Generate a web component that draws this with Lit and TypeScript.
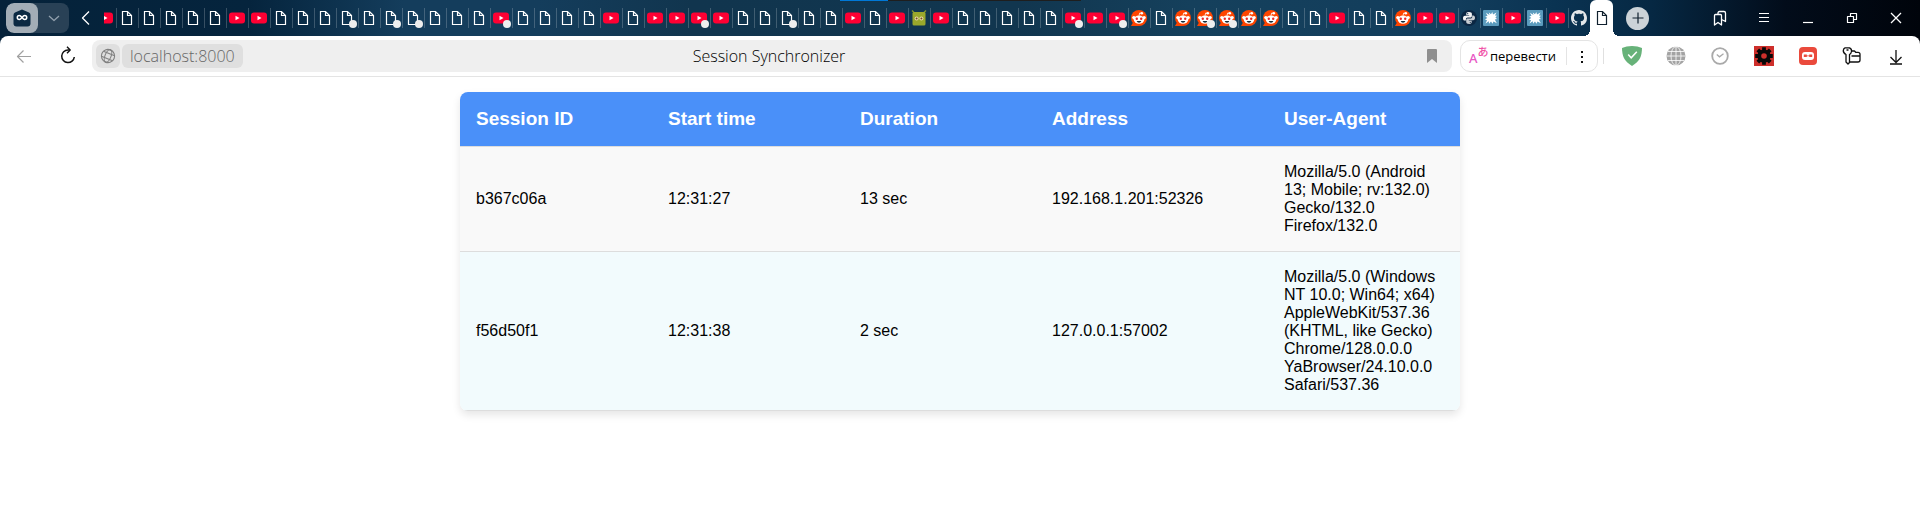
import { LitElement, html, css, svg } from "lit";
import { customElement, property } from "lit/decorators.js";

type TabKind = "doc" | "yt" | "reddit" | "bot" | "py" | "splat" | "gh";
interface Tab { kind: TabKind; dot: boolean; title: string; }
interface Session { id: string; start: string; duration: string; address: string; agent: string; }

const KINDS: Record<string, [TabKind, string]> = {
  d: ["doc", "Page"],
  y: ["yt", "YouTube"],
  r: ["reddit", "Reddit"],
  b: ["bot", "Bot"],
  p: ["py", "Python"],
  s: ["splat", "Forum"],
  g: ["gh", "GitHub"],
};

// One letter per tab; an upper-case letter carries a notification dot.
const STRIP = "ydddddyydddDdDDdddYddddydyyYyddDddydybydddddYyYrdrRRrrddyddryypsysyg";

const TABS: Tab[] = [...STRIP].map((c) => {
  const [kind, title] = KINDS[c.toLowerCase()];
  return { kind, title, dot: c !== c.toLowerCase() };
});

const SESSIONS: Session[] = [
  { id: "b367c06a", start: "12:31:27", duration: "13 sec", address: "192.168.1.201:52326",
    agent: "Mozilla/5.0 (Android 13; Mobile; rv:132.0) Gecko/132.0 Firefox/132.0" },
  { id: "f56d50f1", start: "12:31:38", duration: "2 sec", address: "127.0.0.1:57002",
    agent: "Mozilla/5.0 (Windows NT 10.0; Win64; x64) AppleWebKit/537.36 (KHTML, like Gecko) Chrome/128.0.0.0 YaBrowser/24.10.0.0 Safari/537.36" },
];

const doc = svg`<path d="M3.500 1.500h5l4 4v9h-9z M8.500 1.500v4h4" fill="none" stroke="currentColor" stroke-width="1.200"/>`;

const FAVICONS = {
  doc,
  yt: svg`<rect x="0" y="2.500" width="16" height="11" rx="3" fill="#ff0033"/><path d="M6.500 5.800v4.400l4-2.200z" fill="#fff"/>`,
  reddit: svg`<circle cx="8" cy="8" r="8" fill="#ff4500"/><path d="M0 16l2.600-4.500L8 16z" fill="#ff4500"/>
    <circle cx="2.900" cy="7.600" r="1.700" fill="#fff"/><circle cx="13.100" cy="7.600" r="1.700" fill="#fff"/>
    <ellipse cx="8" cy="9.600" rx="5.300" ry="4.100" fill="#fff"/><circle cx="10.800" cy="3.300" r="1.300" fill="#fff"/>
    <path d="M8 5.600l.7-2.600 2 .4" fill="none" stroke="#fff" stroke-width=".8"/>
    <circle cx="5.800" cy="8.800" r="1.200" fill="#e8262a"/><circle cx="10.200" cy="8.800" r="1.200" fill="#e8262a"/>
    <path d="M5.600 11h4.800Q9.800 12.800 8 12.800T5.600 11z" fill="#162b36"/>`,
  bot: svg`<path d="M1 .6l2.500 2.400M15 .6l-2.500 2.400" stroke="#7f9330" stroke-width="1.400"/>
    <rect x="1.500" y="2" width="13" height="13.500" rx="1.500" fill="#9aa82b"/>
    <circle cx="5.600" cy="8.500" r="2" fill="#e9dcae"/><circle cx="10.400" cy="8.500" r="2" fill="#e9dcae"/>
    <circle cx="5.600" cy="8.500" r="1" fill="#704b1d"/><circle cx="10.400" cy="8.500" r="1" fill="#704b1d"/>`,
  py: svg`<circle cx="8" cy="8" r="8" fill="#0b2743"/>
    <path d="M7.800 2C5.600 2 5.300 3 5.300 3.900v1.300h2.900v.6H4C2.600 5.800 2 7 2 8.200s.6 2.400 1.800 2.400h1.100V9.200c0-1 .8-1.800 1.800-1.800h2.700c.9 0 1.500-.7 1.500-1.500v-2C10.900 2.700 9.800 2 7.800 2z" fill="#f4f5f6"/>
    <path d="M8.200 14c2.200 0 2.500-1 2.500-1.900v-1.300H7.800v-.6H12c1.400 0 2-1.200 2-2.400s-.6-2.400-1.800-2.400h-1v1.400c0 1-.8 1.800-1.800 1.800H6.700c-.9 0-1.500.7-1.500 1.500v2C5.200 13.300 6.200 14 8.200 14z" fill="#c9ced3"/>
    <circle cx="6.700" cy="3.700" r=".6" fill="#0b2743"/><circle cx="9.300" cy="12.300" r=".6" fill="#0b2743"/>`,
  splat: svg`<rect width="16" height="16" rx="1" fill="#5b9bbd"/>
    <path d="M6.500 5L5.800 2.500 8 4.300 9.300 2l.7 2.600L13.500 2.500 12 5.500l2 .3-1.600 1.700L14 9l-2.200.6 2 3.600-3.300-1.700-1 2.300L8 11.600l-2 2.200-.2-2.500L2.500 13.500 4 10.300 2 9.500 4.200 8 2.200 6.200l2.300-.1L3 2.800z" fill="#fff"/>`,
  gh: svg`<path fill="#e3e7ea" fill-rule="evenodd" d="M8 0C3.580 0 0 3.580 0 8c0 3.540 2.290 6.530 5.470 7.590.4.070.55-.17.55-.38 0-.19-.01-.82-.01-1.490-2.010.37-2.530-.49-2.690-.94-.09-.23-.48-.94-.82-1.130-.28-.15-.68-.52-.01-.53.63-.01 1.080.58 1.230.82.72 1.210 1.870.87 2.330.66.07-.52.28-.87.51-1.070-1.780-.2-3.640-.89-3.640-3.950 0-.87.31-1.590.82-2.150-.08-.2-.36-1.020.08-2.120 0 0 .67-.21 2.200.82.64-.18 1.320-.27 2-.27s1.360.09 2 .27c1.530-1.040 2.200-.82 2.200-.82.44 1.100.16 1.920.08 2.120.51.56.82 1.270.82 2.150 0 3.070-1.870 3.750-3.650 3.950.29.25.54.73.54 1.480 0 1.070-.01 1.930-.01 2.200 0 .21.15.46.55.38A8.010 8.010 0 0 0 16 8c0-4.420-3.580-8-8-8z"/>`,
};

const line = (d: string, w = 1.2) =>
  svg`<path d=${d} fill="none" stroke="currentColor" stroke-width=${w} stroke-linejoin="round"/>`;

const ICONS: Record<string, unknown> = {
  profile: svg`<path d="M10 1.500L17 4.600Q18.500 5.400 18.500 7v8.500q0 3-3 3h-11q-3 0-3-3V7q0-1.600 1.500-2.400z" fill="#0b2942"/>
    <path d="M10 9.500c-1-1.300-1.700-2-2.700-2a2 2 0 0 0 0 4c1 0 1.700-.7 2.700-2s1.700-2 2.700-2a2 2 0 0 1 0 4c-1 0-1.700-.7-2.700-2z" fill="none" stroke="#fff" stroke-width="1.500"/>`,
  chevron: line("M5 8l5 4.500L15 8", 1.3),
  scroll: line("M12 3.500L5.500 10l6.500 6.500", 1.3),
  plus: line("M10 4.500v11M4.500 10h11", 1.2),
  collections: svg`${line("M4.500 7.500q0-1 1-1h5q1 0 1 1v9.500L8 14.500 4.500 17z", 1.3)}${line("M8 6.500V5q0-1.500 1.500-1.500h4.500q1.500 0 1.500 1.500v8.500l-4-2", 1.3)}`,
  menu: line("M5 5.500h10M5 9.500h10M5 13.500h10"),
  minimize: line("M5 14.500h10"),
  restore: line("M5.500 8.500h6v6h-6zM8.500 8.500v-3h6v6h-3"),
  close: line("M5 5l10 10M15 5L5 15", 1.3),
  back: line("M17 10.500H3.500M9.500 4.500l-6 6 6 6"),
  reload: svg`${line("M12 4H10A6.300 6.300 0 1 0 16.300 11", 1.5)}${line("M9 .8l3.200 3.200L9 7.200", 1.4)}`,
  globe: svg`<g transform="rotate(22 10 10)" fill="none" stroke="currentColor" stroke-width="1.100"><circle cx="10" cy="10" r="6.600"/><ellipse cx="10" cy="10" rx="3" ry="6.600"/><path d="M4 7.300h12M4 12.700h12"/></g>`,
  bookmark: svg`<path d="M5 4q0-1 1-1h8q1 0 1 1v13l-5-4-5 4z" fill="#8f8f8f"/>`,
  dots: svg`<path d="M9 4h2v2H9zM9 9h2v2H9zM9 14h2v2H9z" fill="#111"/>`,
  shield: svg`<path d="M10 0c4 0 7 .7 10 2-.1 8-2 13-10 18C2 15 .1 10 0 2 3 .7 6 0 10 0z" fill="#67b279"/><path d="M6.200 8.500l3 3.300 5.600-6" fill="none" stroke="#fff" stroke-width="1.500"/>`,
  world: svg`<circle cx="10" cy="10" r="9.500" fill="#a3a3a3"/><path d="M10 .5v19M.5 10h19M2 5.500h16M2 14.500h16" stroke="#fff" stroke-width=".8"/><ellipse cx="10" cy="10" rx="5" ry="9.500" fill="none" stroke="#fff" stroke-width=".8"/>`,
  clock: svg`<circle cx="10" cy="10" r="7.800" fill="none" stroke="#a9a9a9" stroke-width="1.800"/><path d="M6.800 8.500l2.700 2.300 4-3" fill="none" stroke="#a9a9a9" stroke-width="1.300"/>`,
  gear: svg`<path d="M0 0h20v20H0z" fill="#ce2f2b"/>
    <g stroke="#080808" stroke-width="3.800" stroke-linejoin="round"><path d="M10 1.200v17.600M1.200 10h17.600M3.800 3.800l12.400 12.400M16.200 3.800L3.800 16.200"/></g>
    <circle cx="10" cy="10" r="6.600" fill="#080808"/><circle cx="10" cy="10" r="2.800" fill="#ce2f2b"/>`,
  mask: svg`<rect x="1" y="1" width="18" height="18" rx="4" fill="#ea4a3c"/><rect x="4" y="6" width="12" height="8" rx="3" fill="#fff"/>
    <path d="M5.800 8.500h3v2.500h-3zM11.200 8.500h3v2.500h-3zM8.800 9.400h2.400v.8H8.800z" fill="#ea4a3c"/>`,
  keys: svg`${line("M3 1.800h4.500Q10 3 9.500 5.500 9.200 7.500 7.500 8.500v8L6 18l-2-2V8.500Q1 7 1.300 4.300 1.600 2.300 3 1.800z", 1.3)}${line("M9.700 5h2.800l1.200 1.300H16q2 0 2 2V14q0 2-2 2H7.500M9.500 10H18M4.500 4h2", 1.3)}`,
  download: line("M10 4v12M4.500 11l5.500 5.500 5.500-5.500M4 18h12", 1.3),
};

@customElement("ui-icon")
export class UiIcon extends LitElement {
  @property() name = "";
  static styles = css`
    :host { display: block; width: 20px; height: 20px; }
    svg { display: block; width: 100%; height: 100%; overflow: visible; }
  `;
  render() {
    return html`<svg viewBox="0 0 20 20" aria-hidden="true">${ICONS[this.name]}</svg>`;
  }
}

@customElement("tab-strip")
export class TabStrip extends LitElement {
  static styles = css`
    :host { display: flex; min-width: 0; height: 36px; overflow: hidden; }
    .strip { display: flex; min-width: 0; overflow: hidden; }
    .tab {
      position: relative; flex: none; width: 22px; height: 36px; padding: 0 3px;
      border: 0; background: none; color: #fff;
      display: flex; align-items: center; justify-content: center;
    }
    .tab:first-child { margin-left: -10px; }
    .tab::after {
      content: ""; position: absolute; right: -1px; top: 8px; width: 1px; height: 20px;
      background: rgba(255, 255, 255, 0.2);
    }
    .tab:last-child::after { display: none; }
    svg { display: block; width: 16px; height: 16px; flex: none; }
    .dot {
      position: absolute; right: 1px; bottom: 8px; width: 8px; height: 8px;
      border-radius: 50%; background: #eee;
    }
    .active {
      position: relative; flex: none; width: 23px; height: 36px; margin: 0 6px 0 0; padding: 0;
      border: 0; border-radius: 6px 6px 0 0; background: #fff; color: #10202e;
      display: flex; align-items: center; justify-content: center;
    }
    .active::before, .active::after {
      content: ""; position: absolute; bottom: 0; width: 6px; height: 6px;
    }
    .active::before { right: 100%; background: radial-gradient(circle at 0 0, transparent 6px, #fff 6px); }
    .active::after { left: 100%; background: radial-gradient(circle at 100% 0, transparent 6px, #fff 6px); }
  `;
  render() {
    return html`
      <div class="strip" role="tablist">
        ${TABS.map((t) => html`
          <button class="tab" role="tab" aria-label=${t.title}>
            <svg viewBox="0 0 16 16" aria-hidden="true">${FAVICONS[t.kind]}</svg>
            ${t.dot ? html`<span class="dot"></span>` : null}
          </button>`)}
      </div>
      <button class="active" role="tab" aria-selected="true" aria-label="Session Synchronizer">
        <svg viewBox="0 0 16 16" aria-hidden="true">${doc}</svg>
      </button>`;
  }
}

@customElement("session-table")
export class SessionTable extends LitElement {
  static styles = css`
    :host { display: block; max-width: 1000px; margin: 15px auto 0; }
    table {
      width: 100%; table-layout: fixed; border-collapse: separate; border-spacing: 0;
      border-radius: 8px; overflow: hidden; box-shadow: 0 4px 8px rgba(0, 0, 0, 0.1);
      font: 16px/18px "Liberation Sans", Arial, sans-serif; color: #000;
    }
    .narrow { width: 19.2%; }
    .wide { width: 23.2%; }
    th, td { padding: 16px; text-align: left; border-bottom: 1px solid #ddd; }
    th { background: #4a90f9; color: #fff; font-size: 19px; line-height: 22px; }
    tbody tr { background: #f9f9f9; }
    tbody tr:nth-child(even) { background: #f2fbfd; }
  `;
  render() {
    return html`
      <table>
        <colgroup><col class="narrow"><col class="narrow"><col class="narrow"><col class="wide"><col></colgroup>
        <thead><tr><th>Session ID</th><th>Start time</th><th>Duration</th><th>Address</th><th>User-Agent</th></tr></thead>
        <tbody>
          ${SESSIONS.map((s) => html`<tr><td>${s.id}</td><td>${s.start}</td><td>${s.duration}</td><td>${s.address}</td><td>${s.agent}</td></tr>`)}
        </tbody>
      </table>`;
  }
}

@customElement("app-root")
export class AppRoot extends LitElement {
  static styles = css`
    :host { display: block; min-height: 100vh; background: #fff; font-family: "Open Sans", "Noto Sans", sans-serif; }
    * { box-sizing: border-box; }
    button { margin: 0; padding: 0; border: 0; background: none; color: inherit; font: inherit; }
    .chrome {
      position: relative;
      background: linear-gradient(90deg, #05223a 0, #05243d 13%, #143d5c 21%, #143d5c 28%, #11354e 36%, #11364f 53%,
        #15405c 62%, #123d5c 76%, #0a3352 81%, #062843 86%, #020c1a 93%, #00040b 100%);
    }
    .edge {
      position: absolute; top: 0; left: 0; right: 0; width: 241px; height: 1px; margin: 0 auto;
      background: linear-gradient(90deg, #0078d7 20%, #1e1e1e 20%);
    }
    .tabs { display: flex; align-items: center; height: 36px; padding: 0 2px 0 6px; color: #fff; }
    .group { display: flex; height: 30px; border-radius: 8px; overflow: hidden; background: #294156; flex: none; }
    .group button { display: flex; align-items: center; justify-content: center; width: 31px; color: #91a0ad; }
    .group .profile { width: 32px; background: #a3adb6; border-radius: 8px; }
    .scroll { width: 35px; height: 36px; display: grid; place-items: center; flex: none; }
    .add {
      display: grid; place-items: center; flex: none; width: 23px; height: 23px; margin-left: 7px;
      border-radius: 50%; background: #ccd3d8; color: #10202e;
    }
    .spacer { flex: 1; }
    .tool { display: grid; place-items: center; flex: none; width: 44px; height: 36px; }
    .toolbar {
      display: flex; align-items: center; height: 41px; padding: 0 2px; background: #fff;
      border-bottom: 1px solid #e4e4e4; border-radius: 8px 8px 0 0; color: #111;
    }
    .muted { color: #a0a0a0; }
    .address {
      flex: 1; min-width: 0; display: grid; grid-template-columns: 1fr auto 1fr; align-items: center;
      height: 32px; margin: 0 8px 0 2px; padding: 0 10px 0 4px; border-radius: 8px; background: #efefef;
    }
    .site { display: flex; gap: 2px; }
    .info { display: grid; place-items: center; width: 24px; height: 24px; border-radius: 6px; background: #dfdfdf; color: #808080; }
    .host {
      height: 24px; padding: 0 8px; border-radius: 6px; background: #dfdfdf; color: #666;
      font-size: 16px; font-weight: 300; line-height: 24px; text-decoration: none;
    }
    .title { font-size: 16px; font-weight: 300; line-height: 24px; color: #000; }
    .save { justify-self: end; width: 20px; }
    .translate {
      display: flex; align-items: center; flex: none; height: 32px; border: 1px solid #e4e4e4; border-radius: 10px;
      font-size: 13px; color: #000;
    }
    .translate .go { display: flex; align-items: center; gap: 4px; padding: 0 10px 0 8px; height: 30px; }
    .translate .go .label { font-size: 13px; font-weight: 400; }
    .glyphs { display: flex; width: 17px; height: 20px; font-family: "Noto Sans", "Noto Sans CJK JP", sans-serif; color: #e858c4; font-weight: 500; }
    .latin { font-size: 13px; line-height: 14px; padding-top: 5px; }
    .kana { font-size: 11px; line-height: 12px; color: #f04fa6; }
    .translate .more { display: grid; place-items: center; width: 31px; height: 18px; border-left: 1px solid #e4e4e4; }
    .rule { width: 1px; height: 16px; margin: 0 6px 0 5px; background: #e0e0e0; flex: none; }
  `;
  tool(name: string, label: string, cls = "") {
    return html`<button class="tool ${cls}" aria-label=${label}><ui-icon name=${name}></ui-icon></button>`;
  }
  render() {
    return html`
      <header class="chrome">
        <div class="edge"></div>
        <div class="tabs">
          <div class="group">
            <button class="profile" aria-label="Profile"><ui-icon name="profile"></ui-icon></button>
            <button aria-label="Tab groups"><ui-icon name="chevron"></ui-icon></button>
          </div>
          <button class="scroll" aria-label="Scroll tabs"><ui-icon name="scroll"></ui-icon></button>
          <tab-strip></tab-strip>
          <button class="add" aria-label="New tab"><ui-icon name="plus"></ui-icon></button>
          <div class="spacer"></div>
          ${this.tool("collections", "Collections")}
          ${this.tool("menu", "Menu")}
          ${this.tool("minimize", "Minimize")}
          ${this.tool("restore", "Restore")}
          ${this.tool("close", "Close")}
        </div>
        <div class="toolbar">
          ${this.tool("back", "Back", "muted")}
          ${this.tool("reload", "Reload")}
          <div class="address">
            <div class="site">
              <button class="info" aria-label="Site information"><ui-icon name="globe"></ui-icon></button>
              <a class="host" href="#">localhost:8000</a>
            </div>
            <button class="title">Session Synchronizer</button>
            <button class="save" aria-label="Bookmark"><ui-icon name="bookmark"></ui-icon></button>
          </div>
          <div class="translate">
            <button class="go"><span class="glyphs" aria-hidden="true"><span class="latin">A</span><span class="kana">あ</span></span><span class="label">перевести</span></button>
            <button class="more" aria-label="Translation options"><ui-icon name="dots"></ui-icon></button>
          </div>
          <div class="rule"></div>
          ${this.tool("shield", "Ad blocker")}
          ${this.tool("world", "Proxy")}
          ${this.tool("clock", "History")}
          ${this.tool("gear", "Settings")}
          ${this.tool("mask", "Privacy")}
          ${this.tool("keys", "Passwords")}
          ${this.tool("download", "Downloads")}
        </div>
      </header>
      <main><session-table></session-table></main>`;
  }
}
